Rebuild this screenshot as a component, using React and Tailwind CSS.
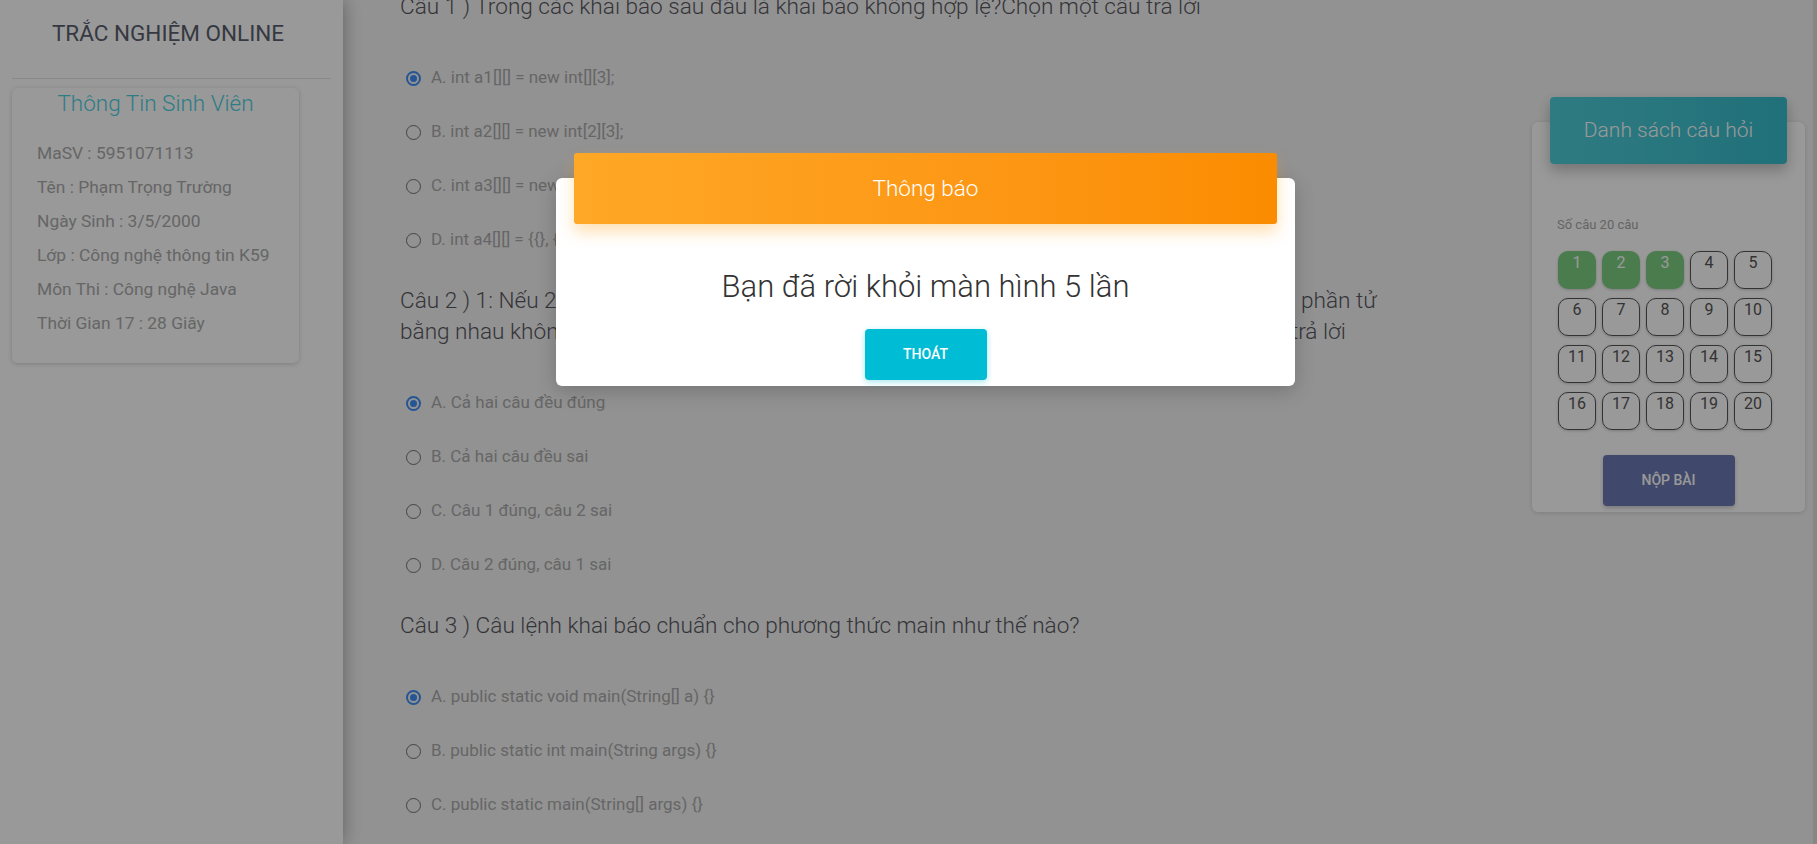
import React from 'react'

const student = [
  'MaSV : 5951071113',
  'Tên : Phạm Trọng Trường',
  'Ngày Sinh : 3/5/2000',
  'Lớp : Công nghệ thông tin K59',
  'Môn Thi : Công nghệ Java',
  'Thời Gian 17 : 28 Giây',
]

const questions = [
  {
    lines: ['Câu 1 ) Trong các khai báo sau đâu là khai báo không hợp lệ?Chọn một câu trả lời'],
    options: ['A. int a1[][] = new int[][3];', 'B. int a2[][] = new int[2][3];', 'C. int a3[][] = new int[2][];', 'D. int a4[][] = {{}, {1, 2}, {3, 4, 5}};'],
    checked: 0,
  },
  {
    lines: [
      'Câu 2 ) 1: Nếu 2 mảng có cùng kích thước thì phương thức equals() sẽ trả về true nếu tất cả phần tử',
      'bằng nhau không? 2: Arrays.equals(a, b) so sánh nội dung của cả hai mảng?Chọn một câu trả lời',
    ],
    options: ['A. Cả hai câu đều đúng', 'B. Cả hai câu đều sai', 'C. Câu 1 đúng, câu 2 sai', 'D. Câu 2 đúng, câu 1 sai'],
    checked: 0,
  },
  {
    lines: ['Câu 3 ) Câu lệnh khai báo chuẩn cho phương thức main như thế nào?'],
    options: ['A. public static void main(String[] a) {}', 'B. public static int main(String args) {}', 'C. public static main(String[] args) {}', 'D. public void static main(String[] args) {}'],
    checked: 0,
  },
]

function Radio({ checked }) {
  if (checked) {
    return (
      <span className="flex h-[15px] w-[15px] shrink-0 items-center justify-center rounded-full border-2 border-[#3f8ef5]">
        <span className="h-[7px] w-[7px] rounded-full bg-[#3f8ef5]" />
      </span>
    )
  }
  return <span className="h-[15px] w-[15px] shrink-0 rounded-full border border-[#707070]" />
}

function Question({ q, first }) {
  return (
    <div className={first ? '' : 'mt-[18px]'}>
      <div className="text-[22.6px] font-light leading-[31px] text-[#58585f]">
        {q.lines.map((l) => (
          <div key={l} className="whitespace-nowrap">{l}</div>
        ))}
      </div>
      <div className="mt-[29px]">
        {q.options.map((o, i) => (
          <div key={o} className="flex h-[54px] items-center gap-[10px] pl-[6px]">
            <Radio checked={i === q.checked} />
            <span className="text-[17px] text-[#aaaaaa]">{o}</span>
          </div>
        ))}
      </div>
    </div>
  )
}

export default function App() {
  const nums = Array.from({ length: 20 }, (_, i) => i + 1)

  return (
    <div className="relative flex h-[844px] w-full overflow-hidden font-['Roboto',sans-serif]">
      {/* sidebar */}
      <aside className="relative z-10 w-[343px] shrink-0 bg-white shadow-[0_0_18px_rgba(0,0,0,0.35)]">
        <h1 className="mt-[19px] pr-[7px] text-center text-[22.5px] leading-[28px] text-[#5a606d]">TRẮC NGHIỆM ONLINE</h1>
        <div className="mx-[12px] mt-[31px] border-t border-[#e4e4e4]" />
        <div className="ml-[12px] mt-[9px] w-[287px] rounded-md bg-white pb-[23px] shadow-[0_1px_5px_rgba(0,0,0,0.18)]">
          <h2 className="text-center text-[22.5px] font-light leading-[30px] text-[#4dcfe0]">Thông Tin Sinh Viên</h2>
          <div className="mt-[18px] pl-[25px]">
            {student.map((s) => (
              <p key={s} className="text-[17.4px] leading-[34px] text-[#aaaaaa]">{s}</p>
            ))}
          </div>
        </div>
      </aside>

      {/* main */}
      <main className="flex flex-1 bg-[#f4f4f4]">
        <section className="flex-1 overflow-hidden pl-[57px]">
          <div className="-mt-[9px]">
            {questions.map((q, i) => (
              <Question key={i} q={q} first={i === 0} />
            ))}
          </div>
        </section>

        <div className="mr-[8px] mt-[122px] w-[273px] shrink-0 self-start rounded-md bg-white pb-[6px] shadow-[0_1px_5px_rgba(0,0,0,0.14)]">
          <div className="mx-[18px] -mt-[25px] flex h-[67px] items-center justify-center rounded-[4px] bg-gradient-to-r from-[#4fcdd9] to-[#36bccb] shadow-[0_6px_14px_rgba(0,0,0,0.25)]">
            <span className="text-[21px] font-light text-white">Danh sách câu hỏi</span>
          </div>
          <p className="mt-[52px] pl-[25px] text-[13px] leading-[18px] text-[#a8a8a8]">Số câu 20 câu</p>
          <div className="mt-[17px] grid grid-cols-[repeat(5,38px)] gap-x-[6px] gap-y-[9px] pl-[26px]">
            {nums.map((n) => (
              <div
                key={n}
                className={
                  n <= 3
                    ? 'h-[38px] rounded-[10px] bg-[#7dcf82] pt-[2px] text-center text-[16px] leading-5 text-white shadow-[0_1px_3px_rgba(0,0,0,0.2)]'
                    : 'h-[38px] rounded-[10px] border border-[#555] pt-[1px] text-center text-[16px] leading-5 text-[#555] shadow-[0_1px_3px_rgba(0,0,0,0.2)]'
                }
              >
                {n}
              </div>
            ))}
          </div>
          <div className="mt-[25px] flex justify-center">
            <button className="h-[51px] w-[132px] rounded-[4px] bg-[#6b7bb2] text-[14px] font-medium text-white shadow-[0_2px_4px_rgba(0,0,0,0.2)]">
              NỘP BÀI
            </button>
          </div>
        </div>
        <div className="w-[4px] shrink-0 bg-[#e2e2e2]" />
      </main>

      {/* modal */}
      <div className="absolute inset-0 z-20 flex justify-center bg-black/40 pl-[34px] pt-[178px]">
        <div className="h-[208px] w-[739px] rounded-md bg-white pb-[6px] shadow-[0_5px_20px_rgba(0,0,0,0.2)]">
          <div className="mx-[18px] -mt-[25px] flex h-[71px] items-center justify-center rounded-[3px] bg-gradient-to-r from-[#ffa726] to-[#fb8c00] shadow-[0_8px_16px_rgba(255,152,0,0.3)]">
            <span className="text-[22.5px] font-light text-white">Thông báo</span>
          </div>
          <p className="mt-[45px] text-center text-[31px] font-light leading-[36px] text-[#333]">Bạn đã rời khỏi màn hình 5 lần</p>
          <div className="mt-[24px] flex justify-center">
            <button className="h-[51px] w-[122px] rounded-[4px] bg-[#00bcd4] text-[14px] font-medium text-white shadow-[0_2px_6px_rgba(0,188,212,0.35)]">
              THOÁT
            </button>
          </div>
        </div>
      </div>
    </div>
  )
}
